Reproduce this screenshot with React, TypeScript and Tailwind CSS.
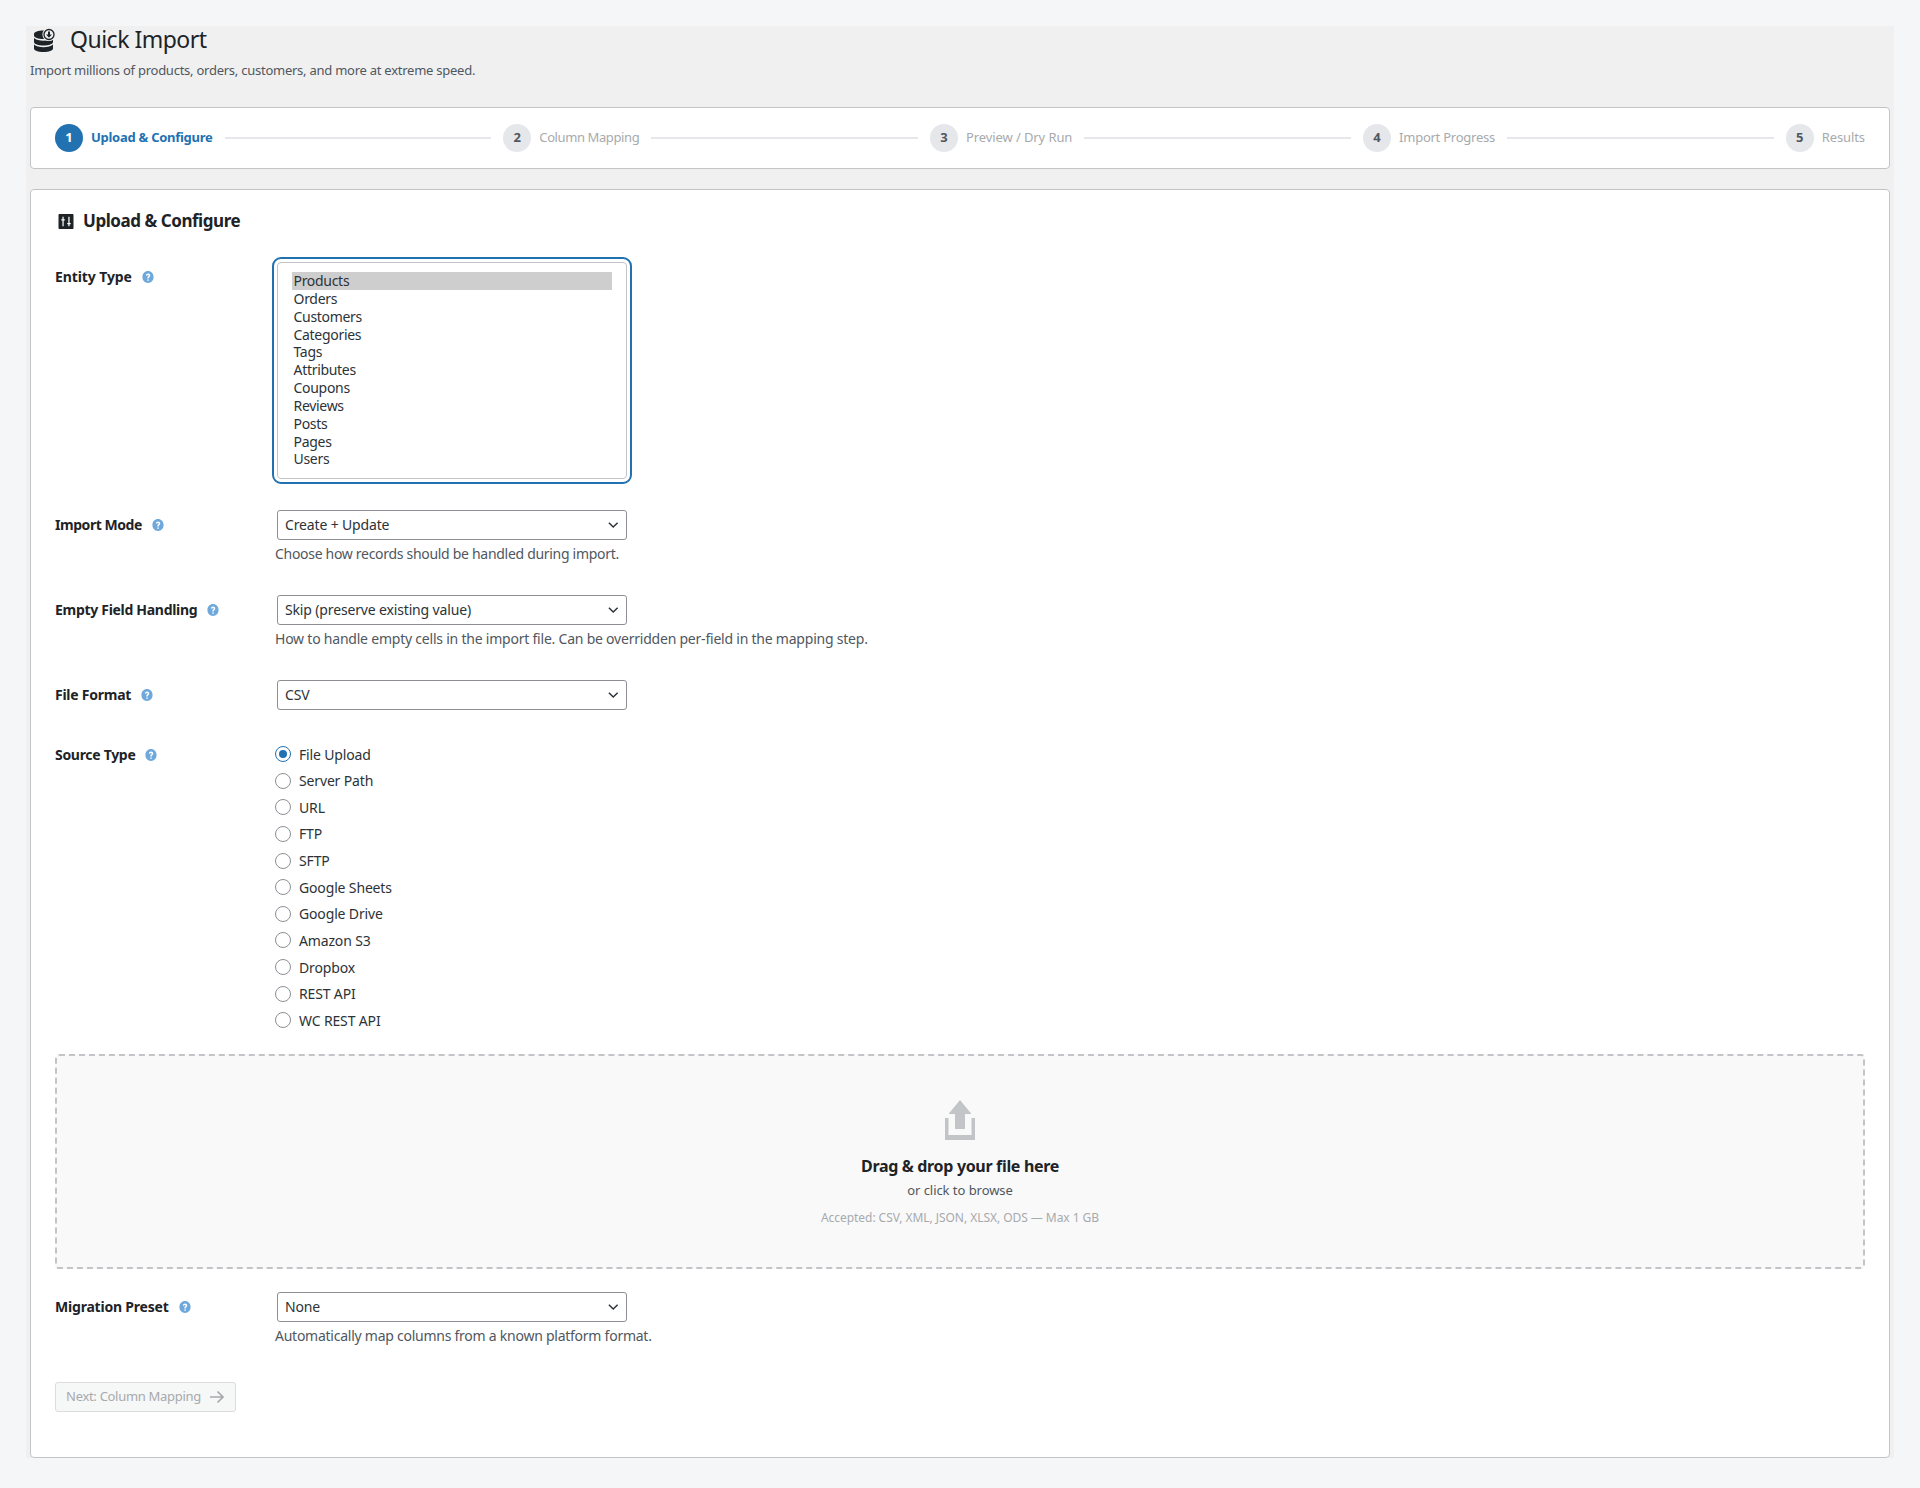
import React from "react";

const font = "font-['Noto_Sans',sans-serif]";

function Help({ className = "" }: { className?: string }) {
  return (
    <svg viewBox="0 0 20 20" className={`w-[14px] h-[14px] ${className}`} aria-hidden="true">
      <path fill="#6fa9dc" fillRule="evenodd" d="M10 1.500c4.400 0 8 3.600 8 8.500s-3.600 8.500-8 8.500-8-3.600-8-8.500 3.600-8.500 8-8.500zM9 13.500v2h2.200v-2H9zM7 7.800l1.700.5c.2-.9.7-1.300 1.300-1.300.7 0 1.100.4 1.100 1 0 .5-.3.8-.9 1.300-.8.7-1.200 1.300-1.200 2.700h2c0-.9.2-1.200.9-1.800.8-.7 1.300-1.300 1.300-2.400C13.200 6.100 11.900 5 10 5 8.400 5 7.400 6 7 7.800z" />
    </svg>
  );
}

function Chevron() {
  return (
    <svg viewBox="0 0 12 8" className="w-[11px] h-[8px]" aria-hidden="true">
      <path d="M1 1.500l4.700 4.700L10.500 1.500" fill="none" stroke="#2c3338" strokeWidth="1.600" />
    </svg>
  );
}

function Select({ value }: { value: string }) {
  return (
    <div className="w-[350px] h-[30px] flex items-center justify-between pl-[7px] pr-[7px] bg-white border border-[#8c8f94] rounded-[3px] text-[14px] tracking-[-0.15px] text-[#2c3338]">
      <span className="pb-[1px]">{value}</span>
      <Chevron />
    </div>
  );
}

function Row({ label, track = "tracking-[-0.3px]", className = "", children }: { label: string; track?: string; className?: string; children: React.ReactNode }) {
  return (
    <div className={`flex ${className}`}>
      <div className="w-[222px] shrink-0 flex items-center gap-[9px] h-[30px] text-[14px] font-bold text-[#1d2327]">
        <span className={`pb-[1px] ${track}`}>{label}</span>
        <Help />
      </div>
      <div className="flex flex-col">{children}</div>
    </div>
  );
}

function Desc({ className = "tracking-[-0.22px]", children }: { className?: string; children: React.ReactNode }) {
  return <p className={`mt-[4px] -ml-[2px] h-[20px] leading-[20px] text-[14px] text-[#50575e] whitespace-nowrap ${className}`}>{children}</p>;
}

const steps = [
  { t: "Upload & Configure", c: "font-bold tracking-[-0.27px] text-[#2271b1]" },
  { t: "Column Mapping", c: "tracking-[-0.4px] text-[#a7aaad]" },
  { t: "Preview / Dry Run", c: "tracking-[-0.1px] text-[#a7aaad]" },
  { t: "Import Progress", c: "tracking-[-0.25px] text-[#a7aaad]" },
  { t: "Results", c: "tracking-[-0.1px] text-[#a7aaad]" },
];
const entities = ["Products", "Orders", "Customers", "Categories", "Tags", "Attributes", "Coupons", "Reviews", "Posts", "Pages", "Users"];
const sources = ["File Upload", "Server Path", "URL", "FTP", "SFTP", "Google Sheets", "Google Drive", "Amazon S3", "Dropbox", "REST API", "WC REST API"];

export default function App() {
  return (
    <div className={`${font} w-[1920px] h-[1488px] bg-[#f5f6f8] pt-[26px] pl-[26px] pr-[26px]`}>
      <div className="bg-[#f0f0f1] px-[4px] h-[1432px]">
        <header className="h-[81px]">
          <div className="flex items-center h-[26px]">
            <svg viewBox="0 0 24 24" className="w-[24px] h-[24px] ml-[3px] mt-[2px] shrink-0" aria-hidden="true">
              <path fill="#1d2327" d="M1 6c0-2.200 4.200-3.500 9.500-3.500S20 3.800 20 6v1.500c0 2-4.200 3.500-9.500 3.500S1 9.500 1 7.500z" />
              <path fill="#1d2327" d="M1 10c2 2 5.500 2.700 9.500 2.700s7.500-.7 9.500-2.700v4c0 2-4.200 3.500-9.500 3.500S1 16 1 14z" />
              <path fill="#1d2327" d="M1 16.500c2 2 5.500 2.700 9.500 2.700s7.500-.7 9.500-2.700v4c0 2-4.200 3.500-9.500 3.500S1 22.500 1 20.500z" />
              <circle cx="16" cy="6.500" r="6.600" fill="#f0f0f1" />
              <circle cx="16" cy="6.500" r="5" fill="#f0f0f1" stroke="#1d2327" strokeWidth="1.300" />
              <path fill="#1d2327" d="M15 3.500h2v3h1.900L16 9.700 13.100 6.500H15z" />
            </svg>
            <h1 className="ml-[13px] text-[23px] leading-[28px] tracking-[-0.5px] font-normal text-[#1d2327] whitespace-nowrap">Quick Import</h1>
          </div>
          <p className="mt-[8px] text-[13px] leading-[20px] tracking-[-0.25px] text-[#50575e] whitespace-nowrap">Import millions of products, orders, customers, and more at extreme speed.</p>
        </header>

        <nav className="h-[62px] bg-white border border-[#c3c4c7] rounded-[4px] px-[24px] flex items-center">
          {steps.map((s, i) => (
            <React.Fragment key={s.t}>
              {i > 0 && <div className="flex-1 h-[2px] bg-[#e5e7eb] mx-[12px]" />}
              <div className="flex items-center gap-[8px] shrink-0">
                <span className={`w-[28px] h-[28px] rounded-full flex items-center justify-center text-[13px] font-bold ${i === 0 ? "bg-[#2271b1] text-white" : "bg-[#e5e7eb] text-[#50575e]"}`}>{i + 1}</span>
                <span className={`pb-[1px] text-[13px] whitespace-nowrap ${s.c}`}>{s.t}</span>
              </div>
            </React.Fragment>
          ))}
        </nav>

        <main className="mt-[20px] h-[1269px] bg-white border border-[#c3c4c7] rounded-[4px] pl-[24px] pr-[24px] overflow-hidden">
          <div className="flex items-center h-[30px] mt-[16px] gap-[9px] ml-[3px]">
            <svg viewBox="0 0 16 16" className="w-[16px] h-[15px]" aria-hidden="true">
              <path fill="#1d2327" fillRule="evenodd" d="M1 0h14a1 1 0 0 1 1 1v14a1 1 0 0 1-1 1H1a1 1 0 0 1-1-1V1a1 1 0 0 1 1-1zM4.200 3v2.500H3V7h1.200v6h1.300V7h1.200V5.500H5.500V3zM10.500 3v6.500H9.300V11h1.200v2h1.300v-2H13V9.500h-1.200V3z" />
            </svg>
            <h2 className="text-[17px] tracking-[-0.45px] font-bold text-[#1d2327] whitespace-nowrap">Upload & Configure</h2>
          </div>

          <Row label="Entity Type" track="tracking-[-0.1px]" className="mt-[26px]">
            <div className="w-[350px] h-[217px] bg-white border border-[#c3c4c7] rounded-[4px] outline-[2px] outline-[#2271b1] outline-offset-[3px] pt-[9px] pl-[14px] pr-[14px] text-[14px] tracking-[-0.3px] text-[#2c3338]">
              {entities.map((e, i) => (
                <div key={e} className={`h-[17.85px] leading-[17.85px] pl-[1.500px] ${i === 0 ? "bg-[#cecece]" : ""}`}>{e}</div>
              ))}
            </div>
          </Row>

          <Row label="Import Mode" track="tracking-[-0.45px]" className="mt-[31px]">
            <Select value="Create + Update" />
            <Desc className="tracking-[-0.3px]">Choose how records should be handled during import.</Desc>
          </Row>

          <Row label="Empty Field Handling" className="mt-[31px]">
            <Select value="Skip (preserve existing value)" />
            <Desc>How to handle empty cells in the import file. Can be overridden per-field in the mapping step.</Desc>
          </Row>

          <Row label="File Format" track="tracking-[-0.25px]" className="mt-[31px]">
            <Select value="CSV" />
          </Row>

          <Row label="Source Type" className="mt-[30px]">
            <div className="-ml-[2px] pt-[6px] flex flex-col gap-[10.64px]">
              {sources.map((s, i) => (
                <label key={s} className="flex items-center gap-[7px] h-[16px] text-[14px] tracking-[-0.15px] text-[#2c3338]">
                  <span className={`w-[16px] h-[16px] rounded-full border bg-white flex items-center justify-center ${i === 0 ? "border-[#2271b1]" : "border-[#8c8f94]"}`}>
                    {i === 0 && <span className="w-[8px] h-[8px] rounded-full bg-[#2271b1]" />}
                  </span>
                  <span className="ml-[1px]">{s}</span>
                </label>
              ))}
            </div>
          </Row>

          <section className="mt-[26px] h-[215px] bg-[#f9f9f9] border-2 border-dashed border-[#c3c4c7] rounded-[4px] flex flex-col items-center pt-[44px]">
            <svg viewBox="0 0 30 40" className="w-[30px] h-[40px]" aria-hidden="true">
              <path fill="#c3c4c7" d="M15 0l11.500 14H20v15H10V14H3.500z" />
              <path fill="#c3c4c7" d="M0 18h3.500v17h23V18H30v22H0z" />
            </svg>
            <p className="mt-[15px] text-[16px] leading-[22px] tracking-[-0.33px] font-bold text-[#1d2327] whitespace-nowrap">Drag & drop your file here</p>
            <p className="mt-[4px] text-[13px] leading-[18px] tracking-[-0.05px] text-[#50575e] whitespace-nowrap">or click to browse</p>
            <p className="mt-[11px] text-[12px] leading-[16px] tracking-[-0.05px] text-[#a7aaad] whitespace-nowrap">Accepted: CSV, XML, JSON, XLSX, ODS — Max 1 GB</p>
          </section>

          <Row label="Migration Preset" track="tracking-[-0.2px]" className="mt-[23px]">
            <Select value="None" />
            <Desc className="tracking-[-0.25px]">Automatically map columns from a known platform format.</Desc>
          </Row>

          <button className="mt-[36px] h-[30px] w-[181px] pb-[1px] flex items-center justify-center gap-[8px] bg-[#f6f7f7] border border-[#dcdcde] rounded-[3px] text-[13px] tracking-[-0.3px] text-[#a7aaad]">
            Next: Column Mapping
            <svg viewBox="0 0 16 14" className="w-[16px] h-[14px]" aria-hidden="true">
              <path d="M1 7h13M8.500 1.500L14 7l-5.500 5.500" fill="none" stroke="#a7aaad" strokeWidth="1.700" />
            </svg>
          </button>
        </main>
      </div>
    </div>
  );
}
